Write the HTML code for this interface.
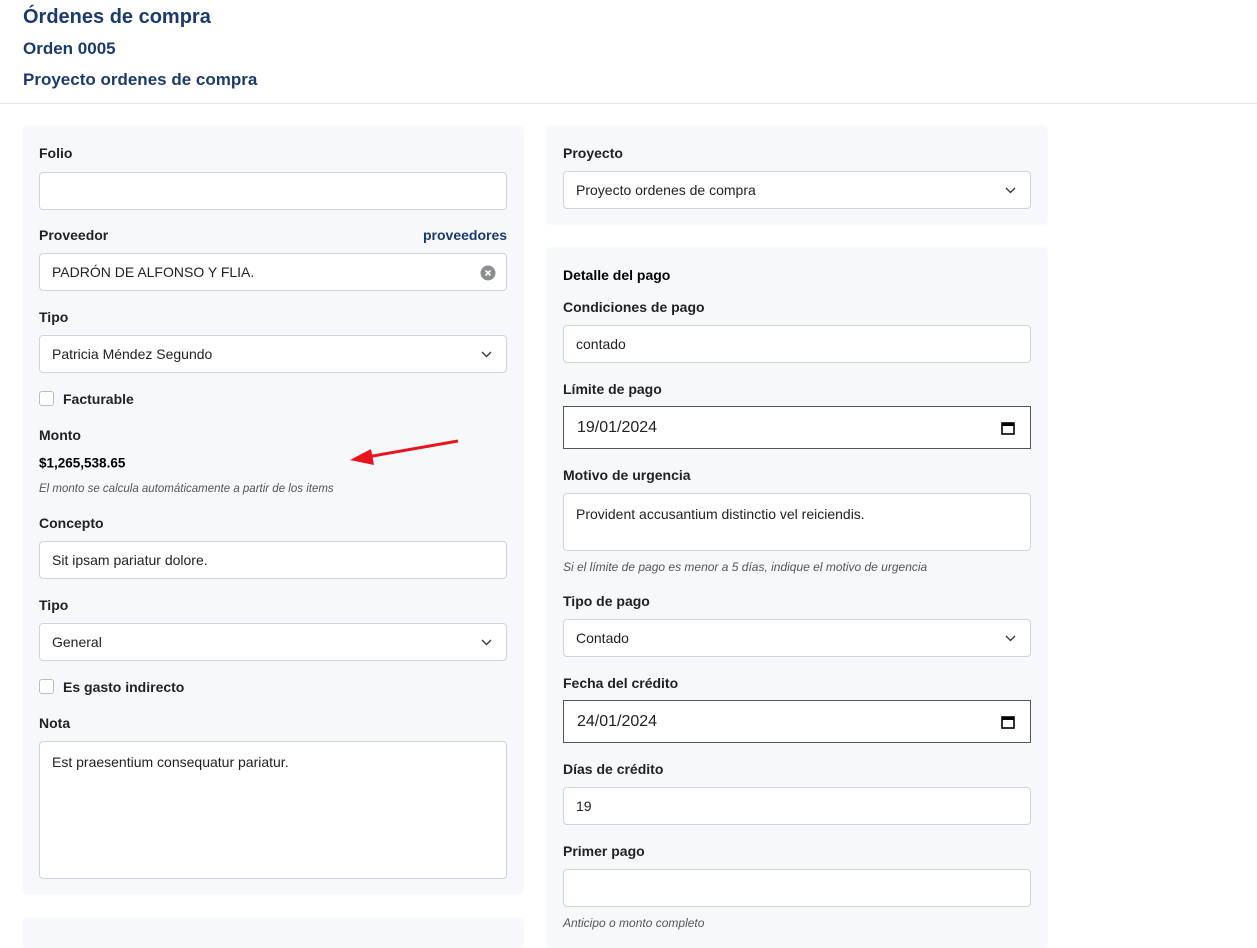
<!DOCTYPE html>
<html><head><meta charset="utf-8"><style>
body{margin:0;width:1257px;height:937px;background:#fff;font-family:"Liberation Sans",Arial,sans-serif;position:relative;overflow:hidden;color:#212529}
.a{position:absolute}
h1,h2{margin:0;position:absolute;color:#1b3a6f;font-weight:bold;left:23px}
.card{position:absolute;background:#f6f8fc;border-radius:3px;box-shadow:0 0 2px rgba(0,0,0,.06)}
.lb{position:absolute;font-size:14px;font-weight:bold;color:#222;transform:translateY(-50%)}
.in{position:absolute;background:#fff;border:1px solid #ced4da;border-radius:4px;box-sizing:border-box;font-size:14px;color:#222;padding:0 12px;display:flex;align-items:center}
.ta{align-items:flex-start;padding-top:12px}
.dt{border:1px solid #555;border-radius:0;font-size:16px;padding-left:13px}
.help{position:absolute;font-size:12px;font-style:italic;color:#555;transform:translateY(-50%)}
.chev{position:absolute;right:14px;top:50%;margin-top:-4px}
.cb{position:absolute;width:15px;height:15px;border:1px solid #bbb;border-radius:3px;background:#fff;box-sizing:border-box}
</style></head><body>
<h1 style="top:6px;font-size:20px">Órdenes de compra</h1>
<h2 style="top:39px;font-size:17px">Orden 0005</h2>
<h2 style="top:70px;font-size:17px">Proyecto ordenes de compra</h2>
<div class="a" style="left:0;top:103px;width:1257px;height:1px;background:#e3e5e8"></div>

<div class="card" style="left:23px;top:126px;width:500px;height:768px"></div>
<div class="card" style="left:23px;top:918px;width:500px;height:30px"></div>
<div class="card" style="left:547px;top:126px;width:500px;height:98px"></div>
<div class="card" style="left:547px;top:248px;width:500px;height:700px"></div>

<div class="lb" style="left:39px;top:153px">Folio</div>
<div class="in" style="left:39px;top:172px;width:468px;height:38px"></div>
<div class="lb" style="left:39px;top:235px">Proveedor</div>
<div class="lb" style="left:423px;top:235px;color:#1b3a6f">proveedores</div>
<div class="in" style="left:39px;top:253px;width:468px;height:38px">PADRÓN DE ALFONSO Y FLIA.
<svg class="a" style="right:10px;top:11px" width="16" height="16"><circle cx="8" cy="8" r="7.5" fill="#8a8d91"/><path d="M5.5 5.5l5 5M10.5 5.5l-5 5" stroke="#fff" stroke-width="1.6"/></svg></div>
<div class="lb" style="left:39px;top:317px">Tipo</div>
<div class="in" style="left:39px;top:335px;width:468px;height:38px">Patricia Méndez Segundo<svg class="chev" width="11" height="8"><path d="M1 2l4.5 4.5L10 2" fill="none" stroke="#333" stroke-width="1.3"/></svg></div>
<div class="cb" style="left:39px;top:391px"></div>
<div class="lb" style="left:63px;top:399px">Facturable</div>
<div class="lb" style="left:39px;top:435px">Monto</div>
<div class="lb" style="left:39px;top:463px;color:#000;font-size:13.5px">$1,265,538.65</div>
<div class="help" style="left:39px;top:489px;font-size:11.5px">El monto se calcula automáticamente a partir de los items</div>
<svg class="a" style="left:345px;top:435px" width="120" height="35"><path d="M113 6L22 22" stroke="#e8141b" stroke-width="3"/><path d="M5 25L26 14L29 30Z" fill="#e8141b"/></svg>
<div class="lb" style="left:39px;top:523px">Concepto</div>
<div class="in" style="left:39px;top:541px;width:468px;height:38px">Sit ipsam pariatur dolore.</div>
<div class="lb" style="left:39px;top:605px">Tipo</div>
<div class="in" style="left:39px;top:623px;width:468px;height:38px">General<svg class="chev" width="11" height="8"><path d="M1 2l4.5 4.5L10 2" fill="none" stroke="#333" stroke-width="1.3"/></svg></div>
<div class="cb" style="left:39px;top:679px"></div>
<div class="lb" style="left:63px;top:687px">Es gasto indirecto</div>
<div class="lb" style="left:39px;top:723px">Nota</div>
<div class="in ta" style="left:39px;top:741px;width:468px;height:138px">Est praesentium consequatur pariatur.</div>

<div class="lb" style="left:563px;top:153px">Proyecto</div>
<div class="in" style="left:563px;top:171px;width:468px;height:38px">Proyecto ordenes de compra<svg class="chev" width="11" height="8"><path d="M1 2l4.5 4.5L10 2" fill="none" stroke="#333" stroke-width="1.3"/></svg></div>
<div class="lb" style="left:563px;top:275px;color:#000">Detalle del pago</div>
<div class="lb" style="left:563px;top:307px">Condiciones de pago</div>
<div class="in" style="left:563px;top:325px;width:468px;height:38px">contado</div>
<div class="lb" style="left:563px;top:389px">Límite de pago</div>
<div class="in dt" style="left:563px;top:406px;width:468px;height:43px">19/01/2024<svg class="a" style="right:15px;top:14px" width="14" height="14"><rect x="1" y="2" width="12" height="11" fill="none" stroke="#000" stroke-width="1.6"/><rect x="1" y="2" width="12" height="3" fill="#000"/></svg></div>
<div class="lb" style="left:563px;top:475px">Motivo de urgencia</div>
<div class="in ta" style="left:563px;top:493px;width:468px;height:58px">Provident accusantium distinctio vel reiciendis.</div>
<div class="help" style="left:563px;top:567px">Si el límite de pago es menor a 5 días, indique el motivo de urgencia</div>
<div class="lb" style="left:563px;top:601px">Tipo de pago</div>
<div class="in" style="left:563px;top:619px;width:468px;height:38px">Contado<svg class="chev" width="11" height="8"><path d="M1 2l4.5 4.5L10 2" fill="none" stroke="#333" stroke-width="1.3"/></svg></div>
<div class="lb" style="left:563px;top:683px">Fecha del crédito</div>
<div class="in dt" style="left:563px;top:700px;width:468px;height:43px">24/01/2024<svg class="a" style="right:15px;top:14px" width="14" height="14"><rect x="1" y="2" width="12" height="11" fill="none" stroke="#000" stroke-width="1.6"/><rect x="1" y="2" width="12" height="3" fill="#000"/></svg></div>
<div class="lb" style="left:563px;top:769px">Días de crédito</div>
<div class="in" style="left:563px;top:787px;width:468px;height:38px">19</div>
<div class="lb" style="left:563px;top:851px">Primer pago</div>
<div class="in" style="left:563px;top:869px;width:468px;height:38px"></div>
<div class="help" style="left:563px;top:923px">Anticipo o monto completo</div>
</body></html>
